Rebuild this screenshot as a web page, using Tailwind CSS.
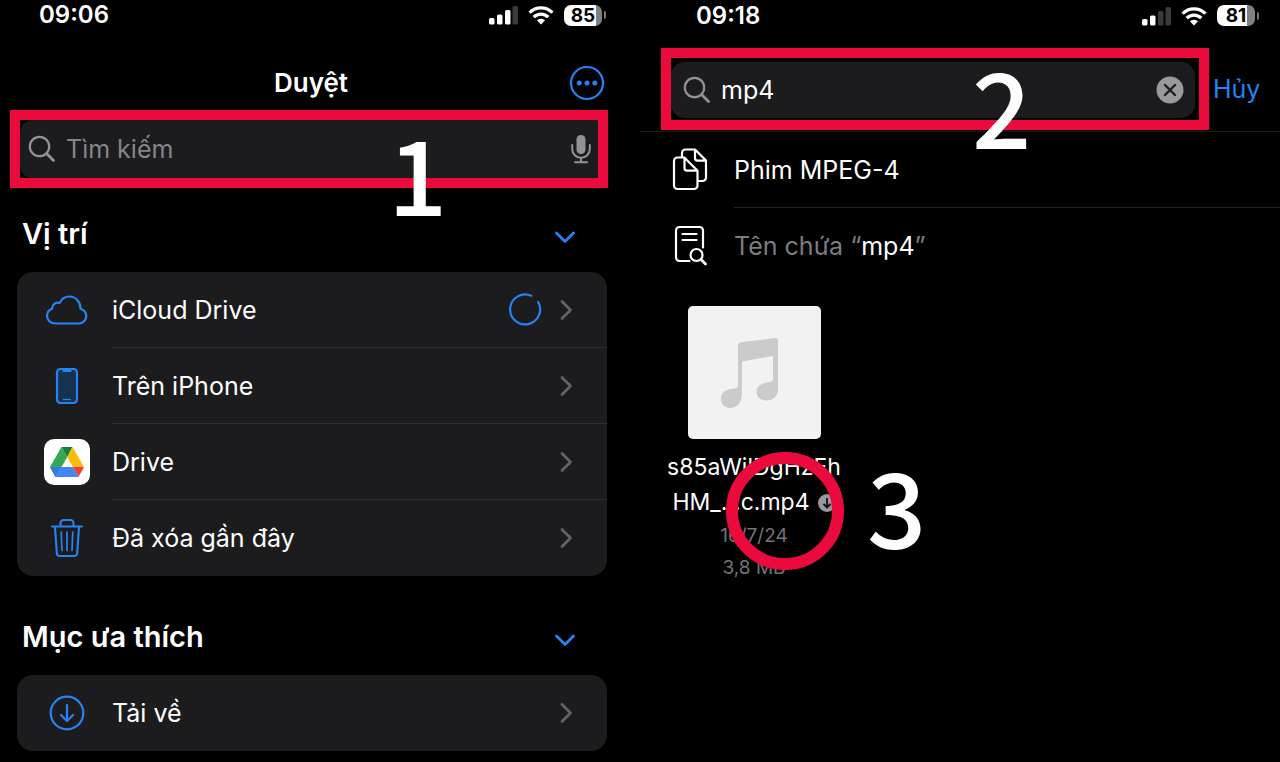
<!DOCTYPE html>
<html lang="vi">
<head>
<meta charset="utf-8">
<meta name="viewport" content="width=device-width, initial-scale=1">
<title>Tệp</title>
<script src="https://cdn.jsdelivr.net/npm/@tailwindcss/browser@4"></script>
</head>
<body class="bg-black text-white font-['Inter','Liberation_Sans',sans-serif] min-h-screen overflow-x-hidden">
<svg class="hidden" aria-hidden="true">
  <symbol id="search" viewBox="0 0 28 28"><g fill="none" stroke="currentColor" stroke-linecap="round"><circle cx="11.500" cy="11.500" r="9.700" stroke-width="2.200"/><path d="M18.800 18.800 25.500 25.500" stroke-width="2.800"/></g></symbol>
  <symbol id="wifi" viewBox="0 0 26 20"><g fill="none" stroke="#fff" stroke-width="3.300"><path d="M1.600 7.600a16 16 0 0 1 22.800 0"/><path d="M5.700 12.200a10.200 10.200 0 0 1 14.600 0"/></g><path d="M13 19.500 8.900 15.300a6 6 0 0 1 8.200 0z" fill="#fff"/></symbol>
  <symbol id="right" viewBox="0 0 14 22"><path d="M3 2.500 11.500 11 3 19.500" fill="none" stroke="#636366" stroke-width="2.800" stroke-linecap="round" stroke-linejoin="round"/></symbol>
  <symbol id="down" viewBox="0 0 22 14"><path d="M2.500 3 11 11.500 19.500 3" fill="none" stroke="#2583f5" stroke-width="2.800" stroke-linecap="round" stroke-linejoin="round"/></symbol>
</svg>
<main class="grid grid-cols-2">
  <section class="relative pl-[17px] pr-[33px]" aria-label="Duyệt">
    <div class="flex h-[30px] items-center justify-between pl-[22px] pr-px">
      <time class="text-[24px] leading-[30px] font-semibold">09:06</time>
      <div class="flex items-center gap-2.5">
        <svg class="h-5 w-[30px]" viewBox="0 0 30 20" role="img" aria-label="Sóng"><g fill="#fff"><rect x="1" y="13" width="5.500" height="6.500" rx="1.500"/><rect x="9" y="9.500" width="5.500" height="10" rx="1.500"/><rect x="17" y="5" width="5.500" height="14.500" rx="1.500"/><rect x="24.500" y="1" width="5.500" height="18.500" rx="1.500" fill="#3a3a3a"/></g></svg>
        <svg class="h-5 w-[26px]" role="img" aria-label="Wi-Fi"><use href="#wifi"/></svg>
        <div class="flex items-center gap-0.5"><div class="h-[21px] w-[38px] rounded-[7px] bg-linear-to-r from-white from-85% to-[#808080] to-85% text-center text-[19px] leading-[21px] font-bold text-black">85</div><div class="h-2 w-0.5 rounded-r bg-[#777]"></div></div>
      </div>
    </div>
    <header class="grid h-20 grid-cols-[36px_1fr_36px] items-center pt-[26px] pr-0.5">
      <span></span>
      <h1 class="text-center text-[26px] leading-8 font-semibold">Duyệt</h1>
      <button aria-label="Tùy chọn khác"><svg class="size-9" viewBox="0 0 36 36"><circle cx="18" cy="18" r="16" fill="none" stroke="#2583f5" stroke-width="2.200"/><g fill="#2583f5"><circle cx="10.200" cy="18" r="2.500"/><circle cx="18" cy="18" r="2.500"/><circle cx="25.800" cy="18" r="2.500"/></g></svg></button>
    </header>
    <div class="-ml-[7px] -mr-px border-10 border-[#eb0a3c]">
      <div class="flex h-[58px] items-center rounded-l-xl bg-[#1c1c1e] pl-2 pr-[7px]">
        <svg class="size-7 shrink-0 text-[#929298]"><use href="#search"/></svg>
        <input type="search" aria-label="Tìm kiếm" placeholder="Tìm kiếm" class="mx-2.5 min-w-0 flex-1 bg-transparent text-[25px] leading-8 outline-none placeholder:text-[#85858c]">
        <button aria-label="Đọc chính tả"><svg class="h-[30px] w-5" viewBox="0 0 20 30"><rect x="5.500" y="1" width="9" height="19" rx="4.500" fill="#929298"/><path d="M1.200 11v4a8.800 8.800 0 0 0 17.600 0v-4M10 24v4M4 28.200h12" fill="none" stroke="#929298" stroke-width="2" stroke-linecap="round"/></svg></button>
      </div>
    </div>
    <div class="flex h-[84px] items-center justify-between pl-[5px] pr-[31px] pt-2">
      <h2 class="text-[29px] leading-9 font-semibold">Vị trí</h2>
      <button aria-label="Thu gọn Vị trí"><svg class="mt-1.5 h-3.5 w-[22px]"><use href="#down"/></svg></button>
    </div>
    <ul class="rounded-[16px] bg-[#1c1c1e] text-[25px] leading-8">
      <li><a href="#" class="flex h-[76px] items-center pl-[27px]">
        <svg class="h-[46px] w-[46px]" viewBox="0 0 46 46"><path d="M11.500 36.500h23.200a7.500 7.500 0 0 0 1.800-14.800C36.500 14.600 31.700 9.500 25.500 9.500c-4.600 0-8 2.200-9.800 6.400-4.200-1-7.700 1.800-7.600 5.900A7.800 7.800 0 0 0 3 29c0 4.300 3.700 7.500 8.500 7.500z" fill="none" stroke="#2583f5" stroke-width="2.200" stroke-linejoin="round"/></svg>
        <span class="ml-[22px] flex h-full flex-1 items-center border-b border-[#303033] pr-[34px]"><span class="flex-1">iCloud Drive</span><svg class="mr-[17px] size-[34px]" viewBox="0 0 34 34"><path d="M23.300 2.700A15 15 0 1 0 30.200 9" fill="none" stroke="#2583f5" stroke-width="2.200" stroke-linecap="round"/></svg><svg class="h-[22px] w-3.5"><use href="#right"/></svg></span>
      </a></li>
      <li><a href="#" class="flex h-[76px] items-center pl-[27px]">
        <svg class="h-[46px] w-[46px]" viewBox="0 0 46 46"><rect x="13" y="6" width="20" height="34" rx="3.500" fill="#16324f" stroke="#2583f5" stroke-width="2.200"/><path d="M18.500 6.500h9v1.500a1 1 0 0 1-1 1h-7a1 1 0 0 1-1-1z" fill="#2583f5"/><path d="M19 36.500h8" stroke="#2583f5" stroke-width="1.300"/></svg>
        <span class="ml-[22px] flex h-full flex-1 items-center border-b border-[#303033] pr-[34px]"><span class="flex-1">Trên iPhone</span><svg class="h-[22px] w-3.5"><use href="#right"/></svg></span>
      </a></li>
      <li><a href="#" class="flex h-[76px] items-center pl-[27px]">
        <svg class="h-[46px] w-[46px]" viewBox="0 0 46 46"><rect width="46" height="46" rx="10" fill="#fff"/><path d="M17.500 8 6 28l5.500 10 11.800-20z" fill="#34a853"/><path d="M17.500 8h11l-5.200 10z" fill="#188038"/><path d="M28.500 8 40 28H29l-5.700-10z" fill="#fbbc04"/><path d="M6 28h11l-5.500 10z" fill="#3b78e7"/><path d="M17 28h12l5.500 10h-23z" fill="#4285f4"/><path d="M29 28h11l-5.500 10z" fill="#ea4335"/></svg>
        <span class="ml-[22px] flex h-full flex-1 items-center border-b border-[#303033] pr-[34px]"><span class="flex-1">Drive</span><svg class="h-[22px] w-3.5"><use href="#right"/></svg></span>
      </a></li>
      <li><a href="#" class="flex h-[76px] items-center pl-[27px]">
        <svg class="h-[46px] w-[46px]" viewBox="0 0 46 46"><g fill="none" stroke="#2583f5" stroke-width="2.100" stroke-linecap="round" stroke-linejoin="round"><path d="M8 11.500h30M16.500 11V8a3 3 0 0 1 3-3h7a3 3 0 0 1 3 3v3M11 12l1.800 26a3 3 0 0 0 3 3h14.400a3 3 0 0 0 3-3L35 12"/><path d="M17.200 17l.8 18.500M23 17v18.500M28.800 17l-.8 18.500" stroke-width="1.700"/></g></svg>
        <span class="ml-[22px] flex h-full flex-1 items-center pr-[34px]"><span class="flex-1">Đã xóa gần đây</span><svg class="h-[22px] w-3.5"><use href="#right"/></svg></span>
      </a></li>
    </ul>
    <div class="flex h-[99px] items-center justify-between pl-[5px] pr-[31px] pt-[22px]">
      <h2 class="text-[29px] leading-9 font-semibold">Mục ưa thích</h2>
      <button aria-label="Thu gọn Mục ưa thích"><svg class="mt-1.5 h-3.5 w-[22px]"><use href="#down"/></svg></button>
    </div>
    <ul class="rounded-[16px] bg-[#1c1c1e] text-[25px] leading-8">
      <li><a href="#" class="flex h-[76px] items-center pl-[27px]">
        <svg class="h-[46px] w-[46px]" viewBox="0 0 46 46"><g fill="none" stroke="#2583f5" stroke-width="2.200" stroke-linecap="round" stroke-linejoin="round"><circle cx="23" cy="23" r="16.300"/><path d="M23 15v15.500M17 25l6 6 6-6"/></g></svg>
        <span class="ml-[22px] flex h-full flex-1 items-center pr-[34px]"><span class="flex-1">Tải về</span><svg class="h-[22px] w-3.5"><use href="#right"/></svg></span>
      </a></li>
    </ul>
    <strong class="absolute left-[388px] top-[119px] font-['Noto_Sans_CJK_SC',sans-serif] text-[104px] leading-[104px] font-medium">1</strong>
  </section>

  <section class="relative" aria-label="Tìm kiếm tệp">
    <div class="flex h-[31px] items-center justify-between pl-14 pr-[21px]">
      <time class="text-[24px] leading-[30px] font-semibold">09:18</time>
      <div class="flex items-center gap-2.5">
        <svg class="h-5 w-[30px]" viewBox="0 0 30 20" role="img" aria-label="Sóng"><g fill="#fff"><rect x="1" y="13" width="5.500" height="6.500" rx="1.500"/><rect x="9" y="9.500" width="5.500" height="10" rx="1.500"/><rect x="17" y="5" width="5.500" height="14.500" rx="1.500" fill="#3a3a3a"/><rect x="24.500" y="1" width="5.500" height="18.500" rx="1.500" fill="#3a3a3a"/></g></svg>
        <svg class="h-5 w-[26px]" role="img" aria-label="Wi-Fi"><use href="#wifi"/></svg>
        <div class="flex items-center gap-0.5"><div class="h-[21px] w-[38px] rounded-[7px] bg-linear-to-r from-white from-80% to-[#808080] to-80% text-center text-[19px] leading-[21px] font-bold text-black">81</div><div class="h-2 w-0.5 rounded-r bg-[#777]"></div></div>
      </div>
    </div>
    <div class="flex h-[101px] items-start border-b border-[#1a1a1b] pl-[21px] pt-[17px]">
      <div class="h-[82px] flex-1 border-10 border-[#eb0a3c] pt-1 pr-1">
        <div class="flex h-[56px] items-center rounded-[14px] bg-[#1c1c1e] pl-3 pr-[11px]">
          <svg class="size-7 shrink-0 text-[#929298]"><use href="#search"/></svg>
          <input type="text" aria-label="Tìm kiếm" value="mp4" class="mx-2.5 min-w-0 flex-1 bg-transparent text-[25px] leading-8 outline-none">
          <button aria-label="Xóa"><svg class="size-7" viewBox="0 0 28 28"><circle cx="14" cy="14" r="13.500" fill="#98989f"/><path d="M9 9l10 10M19 9 9 19" stroke="#1c1c1e" stroke-width="2.400" stroke-linecap="round"/></svg></button>
        </div>
      </div>
      <button class="h-[82px] w-[71px] pl-1 text-left text-[25px] leading-8 text-[#2583f5]">Hủy</button>
    </div>
    <ul class="text-[25px] leading-8">
      <li><a href="#" class="flex h-[76px] items-center pl-[30px]">
        <svg class="h-11 w-10" viewBox="0 1 40 44"><g fill="none" stroke="#fff" stroke-width="2.200" stroke-linejoin="round"><path d="M7 10.500h7.300L27.500 23.700V38.500a3.500 3.500 0 0 1-3.500 3.500H7.500A3.500 3.500 0 0 1 4 38.500V14a3.500 3.500 0 0 1 3.500-3.500zM14.500 10.500v10.500a2.700 2.700 0 0 0 2.700 2.700H27.500"/><path d="M12 10V6A3.500 3.500 0 0 1 15.500 2.500H25l11 11V30.500a3.500 3.500 0 0 1-3.500 3.500h-5M25 3v8a2.700 2.700 0 0 0 2.700 2.700h8"/></g></svg>
        <span class="ml-6 flex h-full flex-1 items-center border-b border-[#222224]">Phim MPEG-4</span>
      </a></li>
      <li><a href="#" class="flex h-[76px] items-center pl-[30px]">
        <svg class="h-11 w-10" viewBox="0 2 40 44"><g fill="none" stroke="#fff" stroke-width="2.200" stroke-linecap="round"><path d="M19.500 39H9.500A3.500 3.500 0 0 1 6 35.500v-27A3.500 3.500 0 0 1 9.500 5h20A3.500 3.500 0 0 1 33 8.500v17M12.500 12h14M12.500 18h14"/><circle cx="26.500" cy="33" r="6"/><path d="M31 37.500l4.500 4.500" stroke-width="2.800"/></g></svg>
        <span class="ml-6 text-[#7c7c82]">Tên chứa “<span class="text-white">mp4</span>”</span>
      </a></li>
    </ul>
    <figure class="ml-[19px] mt-[22px] flex w-[190px] flex-col items-center">
      <svg class="size-[133px]" viewBox="0 0 133 133" role="img" aria-label="Tệp âm thanh"><rect width="133" height="133" rx="5" fill="#f2f2f2"/><path d="M50 40c0-2 1-3.200 3-3.700L87 32c2-.3 3 .6 3 2.400V83c0 7-5 11.500-11.500 11.500-6 0-10-3.500-10-8.700 0-5.600 4.600-8.500 10.500-9.300 4.500-.6 6-1.200 6-4V50L54 55.500V87c0 9-4.500 15-12 15-5.500 0-9-4-9-9 0-6 4.500-9.500 11-10 5-.5 6-1.500 6-5z" fill="#cbcbcb"/></svg>
      <figcaption class="mt-[11px] text-center text-[23px] leading-[35px]">s85aWilDgHzEh<br><span class="flex items-center justify-center gap-2">HM_...c.mp4<svg class="size-[18px]" viewBox="0 0 18 18"><circle cx="9" cy="9" r="9" fill="#98989f"/><path d="M9 4v9M5.500 10 9 13.500 12.500 10" fill="none" stroke="#111" stroke-width="1.800"/></svg></span><span class="block text-[19px] leading-8 text-[#747479]">16/7/24<br>3,8 MB</span></figcaption>
    </figure>
    <strong class="absolute left-[332px] top-[52px] font-['Noto_Sans_CJK_SC',sans-serif] text-[104px] leading-[104px] font-medium">2</strong>
    <div class="absolute left-[86px] top-[452px] size-[118px] rounded-full border-12 border-[#eb0a3c]"></div>
    <strong class="absolute left-[227px] top-[452px] font-['Noto_Sans_CJK_SC',sans-serif] text-[104px] leading-[104px] font-medium">3</strong>
  </section>
</main>
</body>
</html>
